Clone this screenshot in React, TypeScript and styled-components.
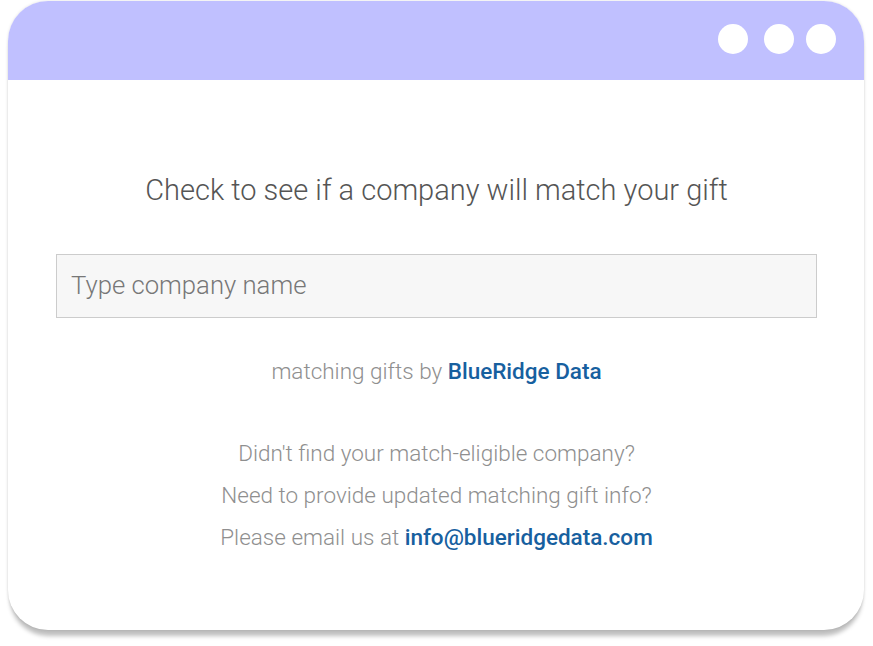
import React from "react";
import styled, { createGlobalStyle } from "styled-components";

const GlobalStyle = createGlobalStyle`
  html, body {
    margin: 0;
    padding: 0;
    background: #ffffff;
    font-family: "Roboto", "Liberation Sans", sans-serif;
  }
`;

const Page = styled.div`
  width: 873px;
  height: 646px;
  padding: 1px 9px 0 8px;
  box-sizing: border-box;
`;

const Window = styled.div`
  width: 856px;
  height: 629px;
  border-radius: 40px;
  background: #ffffff;
  overflow: hidden;
  display: flex;
  flex-direction: column;
  box-shadow: 0 8px 4px -2px rgba(0, 0, 0, 0.25), 0 0 3px rgba(0, 0, 0, 0.12);
`;

const TitleBar = styled.div`
  height: 79px;
  flex-shrink: 0;
  background: #c0c0ff;
  display: flex;
  align-items: center;
  justify-content: flex-end;
  padding-right: 28px;
  padding-bottom: 4px;
  box-sizing: border-box;
`;

const Dot = styled.span<{ $gap: number }>`
  width: 30px;
  height: 30px;
  border-radius: 50%;
  background: #ffffff;
  margin-left: ${(p) => p.$gap}px;
`;

const Body = styled.div`
  display: flex;
  flex-direction: column;
  align-items: center;
  padding: 92px 47px 0 48px;
`;

const Heading = styled.h1`
  margin: 0;
  font-size: 29px;
  font-weight: 300;
  color: #555555;
  line-height: 36px;
`;

const SearchInput = styled.input`
  margin-top: 46px;
  width: 100%;
  height: 64px;
  box-sizing: border-box;
  border: 1px solid #cccccc;
  background: #f7f7f7;
  padding: 0 14px 2px;
  font-family: "Roboto", "Liberation Sans", sans-serif;
  font-size: 25.7px;
  font-weight: 300;
  color: #555555;
  outline: none;

  &::placeholder {
    color: #777777;
  }
`;

const Credit = styled.p`
  margin: 39px 0 0;
  font-size: 22.5px;
  font-weight: 300;
  color: #8f8f8f;
  line-height: 28px;
`;

const Brand = styled.a`
  color: #17609f;
  font-weight: 500;
  text-decoration: none;
`;

const Help = styled.div`
  margin-top: 47px;
  display: flex;
  flex-direction: column;
  align-items: center;
`;

const HelpLine = styled.p`
  margin: 0;
  font-size: 22.5px;
  font-weight: 300;
  color: #8f8f8f;
  line-height: 42px;
`;

export default function App() {
  return (
    <>
      <GlobalStyle />
      <Page>
        <Window>
          <TitleBar>
            <Dot $gap={0} />
            <Dot $gap={16} />
            <Dot $gap={12} />
          </TitleBar>
          <Body>
            <Heading>Check to see if a company will match your gift</Heading>
            <SearchInput type="text" placeholder="Type company name" />
            <Credit>
              matching gifts by <Brand href="#">BlueRidge Data</Brand>
            </Credit>
            <Help>
              <HelpLine>Didn't find your match-eligible company?</HelpLine>
              <HelpLine>Need to provide updated matching gift info?</HelpLine>
              <HelpLine>
                Please email us at <Brand href="#">info@blueridgedata.com</Brand>
              </HelpLine>
            </Help>
          </Body>
        </Window>
      </Page>
    </>
  );
}
